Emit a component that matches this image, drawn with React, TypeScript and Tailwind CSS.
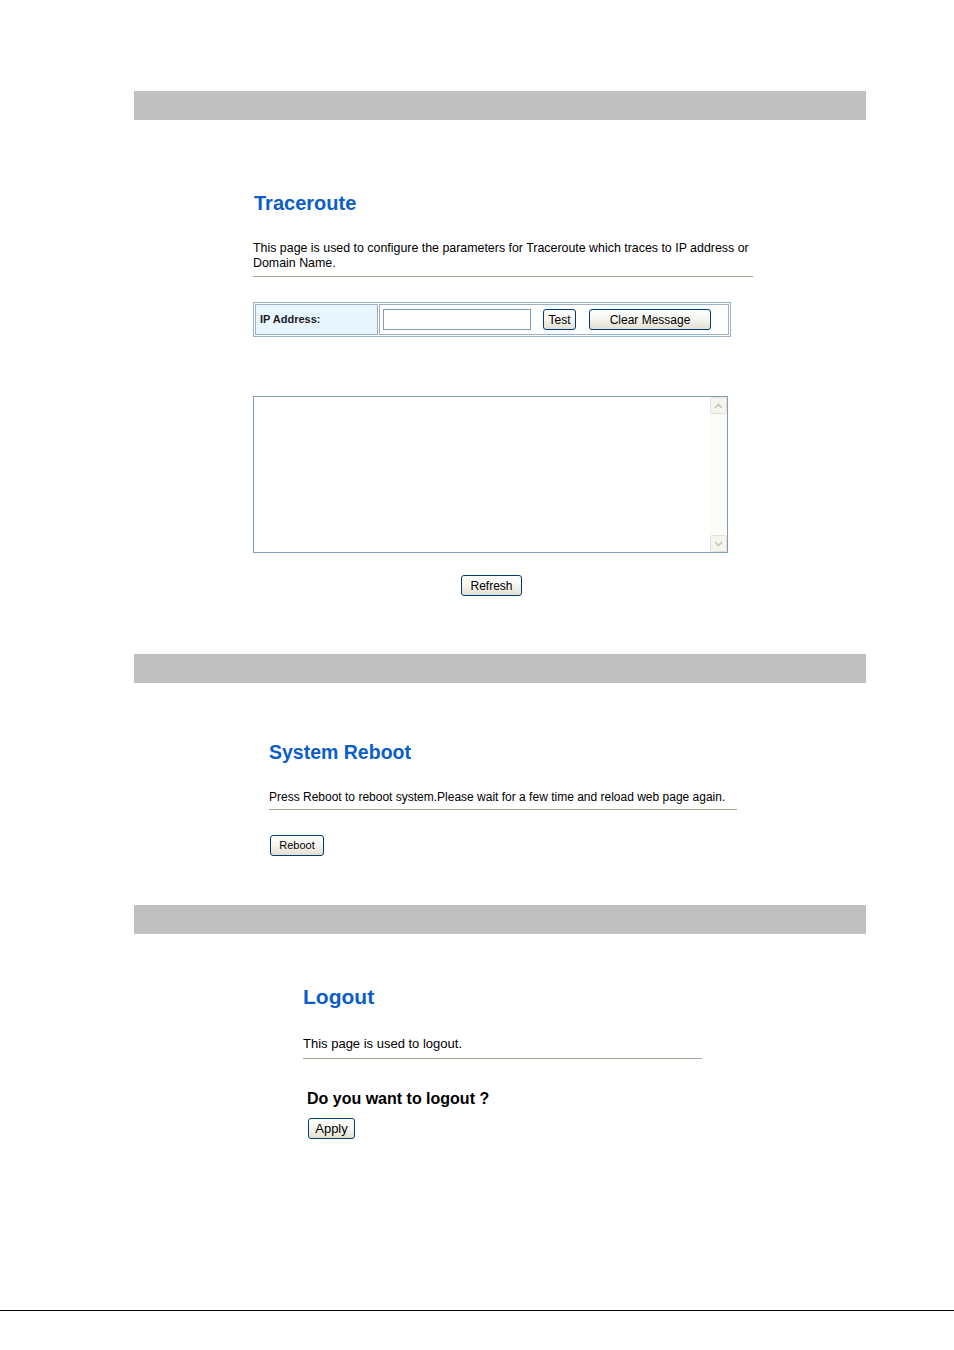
import React from "react";

const btn =
  "border border-[#003c74] rounded-[3px] bg-gradient-to-b from-white via-[#f5f4ee] to-[#e3e0d2] text-black flex items-center justify-center leading-none";

function Bar() {
  return <div className="ml-[134px] w-[732px] h-[29px] bg-[#c0c0c0]" />;
}

function Chevron({ up }: { up?: boolean }) {
  return (
    <svg width="9" height="6" viewBox="0 0 9 6">
      <path
        d={up ? "M1 5 L4.5 1.5 L8 5" : "M1 1 L4.5 4.5 L8 1"}
        fill="none"
        stroke="#c6c4bb"
        strokeWidth="1.6"
      />
    </svg>
  );
}

export default function App() {
  return (
    <div
      className="w-[954px] h-[1350px] bg-white text-black relative"
      style={{ fontFamily: '"Liberation Sans", Arial, sans-serif' }}
    >
      <div className="pt-[91px]">
        <Bar />

        {/* Traceroute */}
        <div className="ml-[253px] w-[500px]">
          <h1 className="mt-[72px] text-[20px] leading-[23px] font-bold text-[#0b5ec8] pl-[1px]">
            Traceroute
          </h1>
          <p className="mt-[26px] text-[12.4px] leading-[15px]">
            This page is used to configure the parameters for Traceroute which traces to IP address or Domain Name.
          </p>
          <div className="mt-[5px] h-px bg-[#aca899]" />

          <div className="mt-[25px] w-[478px] border border-[#9eb0c6] p-px flex gap-px">
            <div className="w-[123px] h-[31px] border border-[#9eb0c6] bg-[#e8f6ff] flex items-center pl-[4px] text-[11px] font-bold text-[#222]">
              IP Address:
            </div>
            <div className="flex-1 h-[31px] border border-[#9eb0c6] flex items-center pl-[3px]">
              <div className="w-[148px] h-[21px] border border-[#7f9db9] bg-white" />
              <div className={`${btn} ml-[12px] w-[33px] h-[21px] text-[12px]`}>Test</div>
              <div className={`${btn} ml-[13px] w-[122px] h-[21px] text-[12px]`}>Clear Message</div>
            </div>
          </div>

          <div className="mt-[59px] w-[475px] h-[157px] border border-[#7f9db9] bg-white flex justify-end">
            <div className="w-[17px] h-full bg-[#fbfbf8] flex flex-col justify-between">
              <div className="w-[17px] h-[17px] border border-[#e4e2d8] rounded-[2px] bg-[#f5f4ef] flex items-center justify-center">
                <Chevron up />
              </div>
              <div className="w-[17px] h-[17px] border border-[#e4e2d8] rounded-[2px] bg-[#f5f4ef] flex items-center justify-center">
                <Chevron />
              </div>
            </div>
          </div>

          <div className="w-[475px] flex justify-center mt-[22px]">
            <div className={`${btn} w-[61px] h-[21px] text-[12px] ml-[2px]`}>Refresh</div>
          </div>
        </div>

        <div className="mt-[58px]">
          <Bar />
        </div>

        {/* System Reboot */}
        <div className="ml-[269px] w-[468px]">
          <h1 className="mt-[58px] text-[19.5px] leading-[23px] font-bold text-[#0b5ec8]">
            System Reboot
          </h1>
          <p className="mt-[26px] text-[12px] leading-[14px]">
            Press Reboot to reboot system.Please wait for a few time and reload web page again.
          </p>
          <div className="mt-[5px] h-px bg-[#aca899]" />
          <div className={`${btn} mt-[25px] ml-px w-[54px] h-[21px] text-[11px]`}>Reboot</div>
        </div>

        <div className="mt-[49px]">
          <Bar />
        </div>

        {/* Logout */}
        <div className="ml-[303px] w-[399px]">
          <h1 className="mt-[51px] text-[21px] leading-[24px] font-bold text-[#0b5ec8]">Logout</h1>
          <p className="mt-[27px] text-[13px] leading-[15px]">This page is used to logout.</p>
          <div className="mt-[7px] h-px bg-[#aca899]" />
          <div className="mt-[31px] ml-[4px] text-[16px] leading-[18px] font-bold">Do you want to logout ?</div>
          <div className={`${btn} mt-[10px] ml-[5px] w-[47px] h-[21px] text-[13px]`}>Apply</div>
        </div>
      </div>

      <div className="absolute left-0 top-[1310px] w-full h-px bg-black" />
    </div>
  );
}
